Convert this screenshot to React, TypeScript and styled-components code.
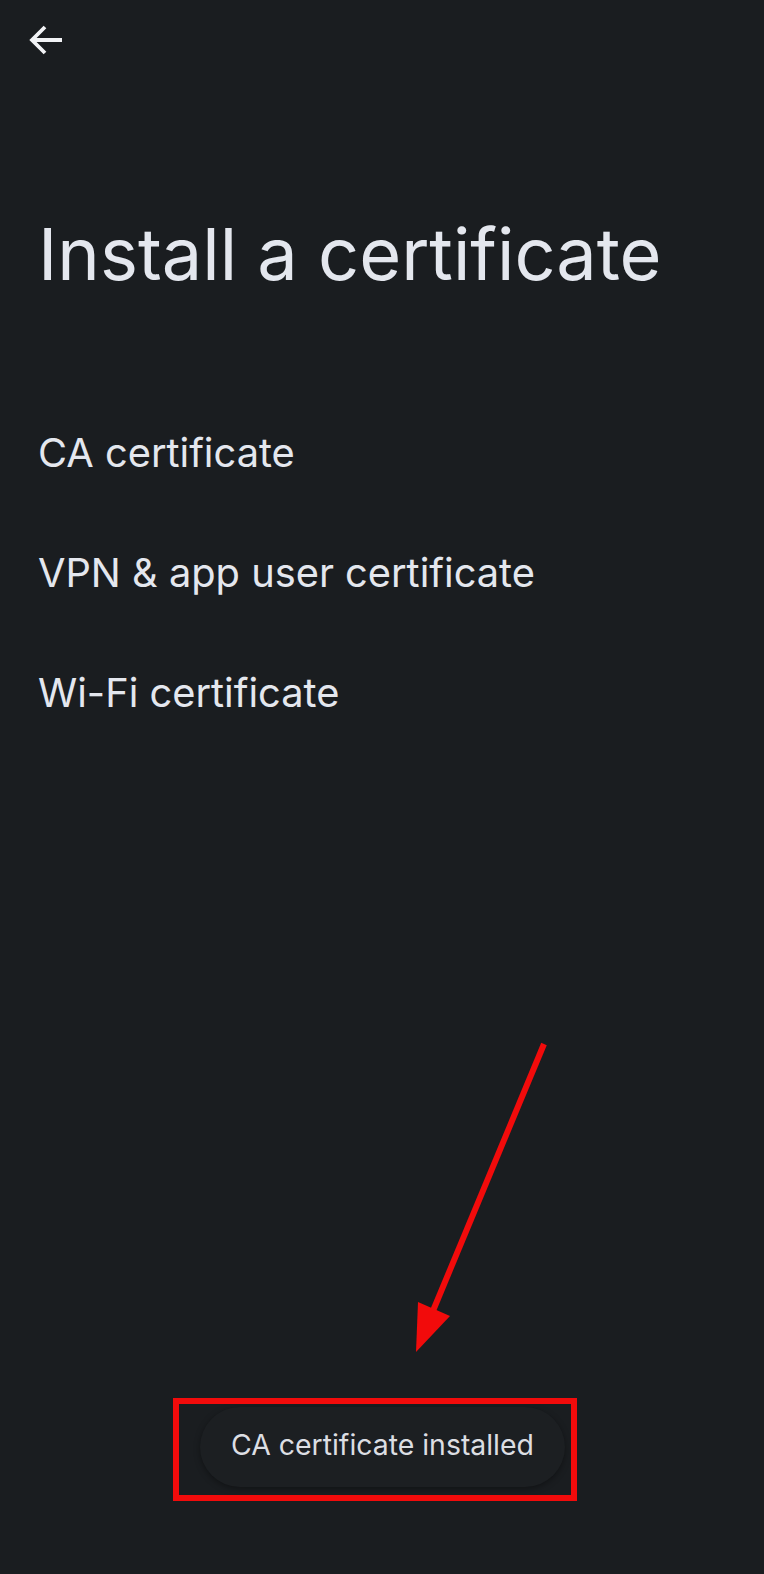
import React from "react";
import styled, { createGlobalStyle } from "styled-components";

const Global = createGlobalStyle`
  html, body { margin: 0; padding: 0; background: #1a1d20; }
  body { font-family: Inter, "Noto Sans", Roboto, sans-serif; }
`;

const Screen = styled.div`
  position: relative;
  width: 764px;
  height: 1574px;
  background: #1a1d20;
  color: #e4e7ee;
  display: flex;
  flex-direction: column;
  overflow: hidden;
`;

const TopBar = styled.div`
  height: 80px;
  display: flex;
  align-items: center;
  padding-left: 22px;
`;

const BackButton = styled.button`
  width: 48px;
  height: 48px;
  padding: 0;
  border: none;
  background: transparent;
  display: flex;
  align-items: center;
  justify-content: center;
  color: #f2f3f6;
`;

const Title = styled.h1`
  margin: 130px 0 0 38px;
  font-size: 72px;
  font-weight: 400;
  line-height: 88px;
  letter-spacing: 0;
`;

const List = styled.div`
  margin-top: 94px;
  display: flex;
  flex-direction: column;
`;

const Item = styled.div`
  height: 120px;
  display: flex;
  align-items: center;
  padding-left: 38px;
  font-size: 39.8px;
  font-weight: 400;
`;

const ToastWrap = styled.div`
  position: absolute;
  left: 0;
  right: 0;
  top: 1407px;
  display: flex;
  justify-content: center;
`;

const Toast = styled.div`
  box-sizing: border-box;
  width: 365px;
  height: 80px;
  padding-bottom: 5px;
  border-radius: 40px;
  background: #1c1f22;
  box-shadow: 0 2px 6px rgba(0, 0, 0, 0.35);
  display: flex;
  align-items: center;
  justify-content: center;
  font-size: 28.4px;
  color: #dcdee3;
  margin-left: 1px;
`;

const Highlight = styled.div`
  position: absolute;
  left: 173px;
  top: 1398px;
  width: 392px;
  height: 91px;
  border: 6px solid #f20b0b;
`;

const Pointer = styled.svg`
  position: absolute;
  left: 0;
  top: 0;
  pointer-events: none;
`;

export default function App() {
  return (
    <>
      <Global />
      <Screen>
        <TopBar>
          <BackButton aria-label="Back">
            <svg width="48" height="48" viewBox="0 0 24 24" fill="none">
              <path d="M20 12H5.5M11.5 5.5L5 12l6.5 6.5" stroke="currentColor" strokeWidth="1.9" />
            </svg>
          </BackButton>
        </TopBar>
        <Title>Install a certificate</Title>
        <List>
          <Item>CA certificate</Item>
          <Item>VPN &amp; app user certificate</Item>
          <Item>Wi-Fi certificate</Item>
        </List>
        <ToastWrap>
          <Toast>CA certificate installed</Toast>
        </ToastWrap>
        <Highlight />
        <Pointer width="764" height="1574" viewBox="0 0 764 1574">
          <line x1="544" y1="1044" x2="430" y2="1318" stroke="#f20b0b" strokeWidth="6" />
          <polygon points="416,1352 418,1302 450,1316" fill="#f20b0b" />
        </Pointer>
      </Screen>
    </>
  );
}
